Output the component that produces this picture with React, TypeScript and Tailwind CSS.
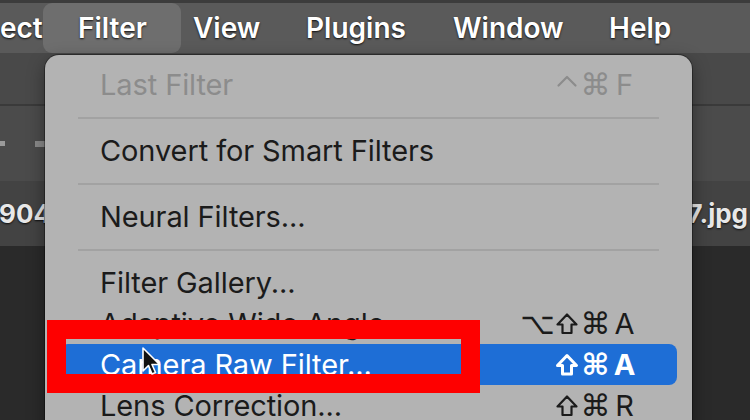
import React from 'react';

type Item =
  | { kind: 'sep' }
  | { kind: 'item'; label: string; keys?: string[]; disabled?: boolean; active?: boolean };

const ITEMS: Item[] = [
  { kind: 'item', label: 'Last Filter', keys: ['ctrl', '⌘', 'F'], disabled: true },
  { kind: 'sep' },
  { kind: 'item', label: 'Convert for Smart Filters' },
  { kind: 'sep' },
  { kind: 'item', label: 'Neural Filters...' },
  { kind: 'sep' },
  { kind: 'item', label: 'Filter Gallery...' },
  { kind: 'item', label: 'Adaptive Wide Angle...', keys: ['⌥', 'shift', '⌘', 'A'] },
  { kind: 'item', label: 'Camera Raw Filter...', keys: ['shift', '⌘', 'A'], active: true },
  { kind: 'item', label: 'Lens Correction...', keys: ['shift', '⌘', 'R'] },
];

const BAR = [
  { label: 'ect', w: 'w-[43px]', pl: 'pl-0' },
  { label: 'Filter', w: 'w-[138px]', pl: 'pl-[35px]', open: true },
  { label: 'View', w: 'w-[125px]', pl: 'pl-[12px]' },
  { label: 'Plugins', w: 'w-[147px]', pl: 'pl-0' },
  { label: 'Window', w: 'w-[156px]', pl: 'pl-0' },
  { label: 'Help', w: 'w-[141px]', pl: 'pl-0' },
];

// modifier glyphs drawn as icons so they look like the mac ones
function KeyGlyph({ k, bold }: { k: string; bold?: boolean }) {
  const sw = bold ? 3 : 2.2;
  if (k === 'shift') {
    return (
      <svg width="24" height="24" viewBox="0 0 24 24" className="mt-[1px]">
        <path d="M12 2.5 L21.5 12.5 L16.5 12.5 L16.5 21 L7.5 21 L7.5 12.5 L2.5 12.5 Z" fill="none" stroke="currentColor" strokeWidth={sw} strokeLinejoin="round" />
      </svg>
    );
  }
  if (k === 'ctrl') {
    return (
      <svg width="22" height="24" viewBox="0 0 22 24">
        <path d="M2.5 12.5 L11 4 L19.5 12.5" fill="none" stroke="currentColor" strokeWidth={sw} strokeLinecap="round" strokeLinejoin="round" />
      </svg>
    );
  }
  if (k === '⌘' || k === '⌥') {
    return <span className="font-['DejaVu_Sans',sans-serif] text-[30px] leading-none">{k}</span>;
  }
  return <span className="text-[29px] leading-none">{k}</span>;
}

function Shortcut({ keys, active }: { keys: string[]; active?: boolean }) {
  return (
    <div className={`flex items-center ${active ? 'font-bold' : ''}`}>
      {keys.map((k, i) => (
        <span key={i} className="w-[29px] flex justify-center">
          <KeyGlyph k={k} bold={active} />
        </span>
      ))}
    </div>
  );
}

function MenuRow({ item }: { item: Item }) {
  if (item.kind === 'sep') {
    return (
      <div className="h-[25px] flex items-center px-[33px]">
        <div className="h-[2px] w-full bg-[#a2a2a2]" />
      </div>
    );
  }
  const color = item.active ? 'text-white bg-[#1e6ed6]' : item.disabled ? 'text-[#8c8c8c]' : 'text-[#1b1b1b]';
  return (
    <div className={`h-[41px] mx-[15px] pl-[40px] pr-[38px] rounded-[8px] flex items-center justify-between ${color}`}>
      <span className="text-[29px] tracking-[-0.1px]">{item.label}</span>
      {item.keys && <Shortcut keys={item.keys} active={item.active} />}
    </div>
  );
}

export default function App() {
  return (
    <div className="relative w-[750px] h-[420px] overflow-hidden bg-[#2a2a2a] flex flex-col font-['Inter','Liberation_Sans',sans-serif]">
      {/* mac menu bar */}
      <div className="h-[53px] shrink-0 bg-[#5a5a5a] border-t-[3px] border-[#3c3c3c] flex text-white font-semibold text-[28px] [text-shadow:0_1px_2px_rgba(0,0,0,0.85)]">
        {BAR.map((b) => (
          <div
            key={b.label}
            className={`${b.w} ${b.pl} shrink-0 flex items-center ${b.open ? 'bg-[#6e6e6e] rounded-[9px]' : ''}`}
          >
            {b.label}
          </div>
        ))}
      </div>

      {/* app toolbar rows */}
      <div className="h-[53px] shrink-0 bg-[#494949] border-b-2 border-[#3a3a3a]" />
      <div className="h-[75px] shrink-0 bg-[#4b4b4b] flex items-center justify-between">
        <div className="flex items-center gap-[30px]">
          <div className="w-[5px] h-[5px] bg-[#9a9a9a]" />
          <div className="w-[10px] h-[6px] bg-[#8a8a8a]" />
        </div>
      </div>
      <div className="h-[65px] shrink-0 bg-[#434343] flex items-center justify-between text-[#e8e8e8] font-bold text-[26px] [text-shadow:0_1px_2px_rgba(0,0,0,0.8)]">
        <span className="-ml-[1px]">904</span>
        <span className="mr-[2px]">7.jpg</span>
      </div>
      <div className="flex-1 bg-[#2a2a2a]" />

      {/* Filter dropdown */}
      <div className="absolute left-[45px] top-[55px] w-[647px] h-[380px] rounded-[14px] bg-[#b3b3b3] shadow-[0_0_0_1px_rgba(0,0,0,0.35),0_6px_18px_rgba(0,0,0,0.4)] pt-[9px]">
        {ITEMS.map((it, i) => (
          <MenuRow key={i} item={it} />
        ))}
      </div>

      {/* red annotation box */}
      <div className="absolute left-[47px] top-[320px] w-[433px] h-[73px] border-[19px] border-[#fe0000]" />

      {/* mouse pointer */}
      <svg className="absolute left-[141px] top-[347px]" width="22" height="30" viewBox="0 0 22 30">
        <path d="M2 1 L2 24 L7.5 18.5 L11 27 L14.5 25.5 L11 17.5 L18.5 17.5 Z" fill="#111" stroke="#fff" strokeWidth="1.6" strokeLinejoin="round" />
      </svg>
    </div>
  );
}
